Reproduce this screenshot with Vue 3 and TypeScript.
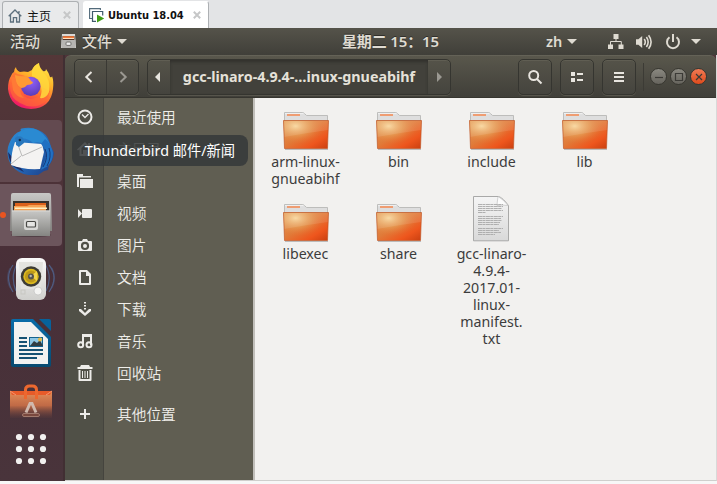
<script setup lang="ts">
interface Place { name: string; icon: string }
interface Entry { kind: 'folder' | 'text'; lines: string[] }

const places: Place[] = [
  { name: '最近使用', icon: 'recent' },
  { name: '主目录', icon: 'home' },
  { name: '桌面', icon: 'desktop' },
  { name: '视频', icon: 'video' },
  { name: '图片', icon: 'camera' },
  { name: '文档', icon: 'doc' },
  { name: '下载', icon: 'download' },
  { name: '音乐', icon: 'music' },
  { name: '回收站', icon: 'trash' },
  { name: '其他位置', icon: 'plus' },
]

const entries: Entry[] = [
  { kind: 'folder', lines: ['arm-linux-', 'gnueabihf'] },
  { kind: 'folder', lines: ['bin'] },
  { kind: 'folder', lines: ['include'] },
  { kind: 'folder', lines: ['lib'] },
  { kind: 'folder', lines: ['libexec'] },
  { kind: 'folder', lines: ['share'] },
  { kind: 'text', lines: ['gcc-linaro-', '4.9.4-', '2017.01-', 'linux-', 'manifest.', 'txt'] },
]
const paperLines: number[][] = [
  [8, 25], [10, 25], [12, 24], [14, 25], [16, 8], [20, 25], [22, 23], [24, 24], [26, 22], [28, 21], [32, 25], [34, 21], [36, 23], [38, 17],
]
const dots: number[][] = [12, 24, 36].flatMap((y) => [12, 24, 36].map((x) => [x, y]))
</script>

<template>
  <div class="screen">
    <svg class="defs" width="0" height="0">
      <defs>
        <linearGradient id="folderBase" x1="0" y1="0" x2="1" y2="1">
          <stop offset="0" stop-color="#e0995a" /><stop offset=".45" stop-color="#e07c3a" />
          <stop offset=".75" stop-color="#ee561d" /><stop offset="1" stop-color="#c93f10" />
        </linearGradient>
        <radialGradient id="folderGlow" cx=".27" cy=".2" r=".65">
          <stop offset="0" stop-color="#f8d69b" /><stop offset=".5" stop-color="#e9a55c" stop-opacity=".6" />
          <stop offset="1" stop-color="#e87030" stop-opacity="0" />
        </radialGradient>
        <linearGradient id="folderBack" x1="0" y1="0" x2="0" y2="1">
          <stop offset="0" stop-color="#fff" /><stop offset=".25" stop-color="#dedede" />
        </linearGradient>
        <linearGradient id="paper" x1="0" y1="0" x2="0" y2="1">
          <stop offset="0" stop-color="#f5f5f5" /><stop offset="1" stop-color="#d9d9d9" />
        </linearGradient>
        <linearGradient id="fox" x1=".85" y1="0" x2=".35" y2="1">
          <stop offset="0" stop-color="#fff04c" /><stop offset=".35" stop-color="#ffb52a" />
          <stop offset=".65" stop-color="#ff6a33" /><stop offset="1" stop-color="#ed1769" />
        </linearGradient>
        <radialGradient id="globe" cx=".5" cy=".25" r=".75">
          <stop offset="0" stop-color="#9160fa" /><stop offset="1" stop-color="#5a3cb8" />
        </radialGradient>
        <linearGradient id="bird" x1="0" y1="0" x2="1" y2="1">
          <stop offset="0" stop-color="#2c8fd8" /><stop offset=".55" stop-color="#2468b8" /><stop offset="1" stop-color="#1c3a83" />
        </linearGradient>
        <linearGradient id="steel" x1="0" y1="0" x2="0" y2="1">
          <stop offset="0" stop-color="#c8c8c6" /><stop offset="1" stop-color="#858582" />
        </linearGradient>
        <linearGradient id="speaker" x1="0" y1="0" x2="0" y2="1">
          <stop offset="0" stop-color="#fafafa" /><stop offset="1" stop-color="#cfcfcc" />
        </linearGradient>
        <linearGradient id="writer" x1="0" y1="0" x2="0" y2="1">
          <stop offset="0" stop-color="#096ca9" /><stop offset="1" stop-color="#084a70" />
        </linearGradient>
        <linearGradient id="bag" gradientUnits="userSpaceOnUse" x1="0" y1="10" x2="0" y2="35">
          <stop offset="0" stop-color="#e08a56" /><stop offset=".5" stop-color="#c06a46" /><stop offset="1" stop-color="#75453c" stop-opacity=".1" />
        </linearGradient>
      </defs>
    </svg>

    <header class="tabs">
      <div class="tab hometab">
        <svg width="14" height="14" viewBox="0 0 14 14" fill="none" stroke="#5d707e" stroke-width="1.3"><path d="M.7 7.2 7 1l6.3 6.2M2.5 6v7H5.4V8.7h3.2V13h2.9V6M11 2v2" /></svg>
        <span class="cn">主页</span>
        <svg class="x" width="8" height="8" viewBox="0 0 8 8"><path d="m.8.8 6.4 6.4M7.2.8.8 7.2" /></svg>
      </div>
      <div class="tab vm">
        <svg width="16" height="15" viewBox="0 0 16 15" fill="none"><path d="M3 10.5H.6V.6h10.8V2" stroke="#526a7a" stroke-width="1.1" /><path d="M7 13.3H3.5V3.5h10.2v4" stroke="#405a6b" stroke-width="1.2" /><path d="M8 6.5 15.2 10.5 8 14.5Z" fill="#429d16" /></svg>
        <span class="vmname">Ubuntu 18.04</span>
        <svg class="x" width="8" height="8" viewBox="0 0 8 8"><path d="m.8.8 6.4 6.4M7.2.8.8 7.2" /></svg>
      </div>
    </header>

    <div class="panel">
      <span class="activities">活动</span>
      <svg class="minifiles" width="15" height="15" viewBox="0 0 15 15"><path d="M1 0h13l1 14H0Z" fill="#dad9d6" /><path d="M1.5 2h12v4h-12z" fill="#54382d" /><path d="M2 2.2h11v2.5H2z" fill="#f17b3c" /><path d="M2 4h11v1H2z" fill="#ffe0bd" /><path d="M.5 6h14v8H.5z" fill="#b6b5b2" /><rect x="5" y="8" width="5" height="3.4" rx="1" fill="#eee" stroke="#73726f" /></svg>
      <span class="appname">文件</span>
      <i class="caret"></i>
      <span class="clock">星期二 15：15</span>
      <div class="status">
        <span class="zh">zh</span><i class="caret"></i>
        <svg class="net" width="16" height="16" viewBox="0 0 16 16"><path d="M5.5 0h5v5h-5zM0 10.5h5V15H0zM10.5 10.5h5V15h-5z" fill="#dfdbd2" /><path d="M8 5v3M2.5 11V7.5h10.8V11" fill="none" stroke="#dfdbd2" /></svg>
        <svg class="vol" width="16" height="16" viewBox="0 0 16 16"><path d="M0 5.2h2.4L6.2 2v12L2.4 10.8H0Z" fill="#dfdbd2" /><path d="M8.2 5q2.2 3 0 6M10.4 3q3.5 5 0 10M12.6 1.2q5 6.8 0 13.6" fill="none" stroke="#dfdbd2" stroke-width="1.6" /></svg>
        <svg class="pow" width="16" height="16" viewBox="0 0 16 16" fill="none" stroke="#dfdbd2" stroke-width="2"><path d="M4.5 3.3a6 6 0 1 0 7 0M8 0v8" /></svg>
        <i class="caret"></i>
      </div>
    </div>

    <main class="session">
      <nav class="dock">
        <div class="tile">
          <svg width="48" height="48" viewBox="0 0 48 48">
            <path d="M7 9q0-3 2-5 0 3 4 5 4-1 8 0 2-1 4-2 2-5 7-7 0 4 4 8 3 1 3-2 3 4 4 8 2 1 2-1 2 5 1 13-2 19-22 20Q3 45 1 26 1 17 4 13q1-3 3-4Z" fill="url(#fox)" />
            <path d="M7 9q4 3 8 3l6 2-6 10q0 11 9 12 11-1 11-12l8 4q-2 11-10 14-10 4-20-2Q3 35 3 24q0-9 4-15Z" fill="#ff6a35" opacity=".65" />
            <path d="M25 8q1-5 7-8 0 6 4 9 8 7 6 20-3 7-9 6 3-8 0-14-2-6-8-8Z" fill="#ffd93c" opacity=".85" />
            <circle cx="23.8" cy="23.4" r="9.7" fill="url(#globe)" />
            <path d="M8 12q6 2 11 1 3 1 5 5 2 1 2 2-2 2-6 2-2 3-6 3Q8 22 8 12Z" fill="#ff9a35" />
            <path d="M4 14q4-1 5 3 0 5 5 8-2 6 3 10-8-1-11-8Z" fill="#ff7a36" />
          </svg>
        </div>
        <div class="tile hover">
          <svg width="48" height="48" viewBox="0 0 48 48">
            <path d="M2 17Q6 6 14 4 12 1 18 1q7-1 13 2 9 3 12 13l1 5q3 2 3 5-1 8-5 12l-1 5-4 1-6 4Q14 50 5 39-1 31 1 20Z" fill="url(#bird)" />
            <path d="M14 4Q26-2 36 7q7 7 8 16-9-10-18-7-6-6-14-4-3-5 2-8Z" fill="#2a8ad2" />
            <path d="M1 25q1 10 6 15l10 5-5-6Z" fill="#1b2d66" />
            <path d="m8 15 27 2 2 8-4 17Q16 43 4 38Q4 26 8 15Z" fill="#f4f3f2" />
            <path d="m10 15 5 14 20-9M4 37l10-8" fill="none" stroke="#b3b3b3" stroke-width=".9" />
            <path d="M8 11q3-3 7-1 3 3 2 6l-5 4-3-2Q9 15 8 11Z" fill="#2877bd" /><circle cx="12.8" cy="13" r="1.2" fill="#142d4d" />
            <path d="M34 17q8 7 4 16l-4 10 7-4q5-5 5-13-2-10-8-14Z" fill="#2170c2" /><path d="M38 22q4 8-2 18M42 21q3 9-2 18" fill="none" stroke="#173a7b" />
          </svg>
        </div>
        <div class="tile running">
          <svg width="48" height="48" viewBox="0 0 48 48">
            <ellipse cx="24" cy="44" rx="20" ry="2" fill="#2b1e24" opacity=".4" />
            <path d="M4 4q0-2 2-2h36q2 0 2 2l1 36H3Z" fill="url(#steel)" /><path d="M6 10h36v12H6z" fill="#39322d" />
            <path d="M8 12h31v9H8z" fill="#dc611b" /><path d="M7 15h13l2-1h17v7H7z" fill="#f6a254" /><path d="M8 16.5h32v1.5H8z" fill="#fff0c3" />
            <path d="M5 19.5h38V45H5Z" fill="url(#steel)" /><path d="M5 20h38" stroke="#d8d8d6" /><rect x="17" y="28" width="14" height="11" rx="2" fill="#d8d8d6" /><rect x="19.5" y="30.5" width="9" height="5.5" rx="1" fill="#e5e5e3" stroke="#494946" stroke-width="1.2" />
          </svg>
        </div>
        <div class="tile">
          <svg width="48" height="48" viewBox="0 0 48 48">
            <g fill="none" stroke="#526c9b" stroke-width="1.2" opacity=".75"><path d="M10 9Q3 22 9 36M6 10Q-3 22 6 37M38 9q8 13 1 27M42 10q10 12 0 27" /><path d="M3 13q-5 10 0 20M45 13q5 10 0 20" opacity=".4" /></g>
            <rect x="9" y="3" width="30" height="42" rx="6" fill="url(#speaker)" /><path d="M12 7h24l-2 27H14Z" fill="#e3e3e0" />
            <circle cx="24" cy="21.5" r="10.2" fill="#3d3c36" /><circle cx="24" cy="21.5" r="7.7" fill="#dbb91f" /><circle cx="24" cy="21.5" r="6" fill="#bd9819" /><path d="m24 21 6-5v10Z" fill="#f2d44c" /><circle cx="24" cy="21.5" r="3" fill="#55534e" /><circle cx="23.7" cy="21" r="1.2" fill="#b9b9b4" /><circle cx="31" cy="36" r="4" fill="#f4f4f2" stroke="#bbb" stroke-width=".6" /><rect x="14" y="35" width="4" height="4" fill="none" stroke="#c7c7c2" />
          </svg>
        </div>
        <div class="tile">
          <svg width="48" height="48" viewBox="0 0 48 48">
            <path d="M4 2q0-2 2-2h20l18 18v28q0 2-2 2H6q-2 0-2-2Z" fill="url(#writer)" /><path d="M7 3h17l17 17v25H7Z" fill="#f2f2f1" /><path d="M32 0h10q2 0 2 2v10Z" fill="#07629b" />
            <path d="M12 19h8M12 23h8M12 27h8M12 31h24M12 35h24M12 39h18" stroke="#155173" stroke-width="2" /><rect x="22" y="18" width="14" height="10" fill="#17638d" /><rect x="23" y="19" width="12" height="7.5" fill="#8ec7e5" /><path d="m23 27 4-5 3 2 3-3 3 6Z" fill="#323d43" /><circle cx="33" cy="20.5" r="2" fill="#e5bb47" />
          </svg>
        </div>
        <div class="tile cut">
          <svg width="48" height="48" viewBox="0 0 48 48">
            <path d="M3 8h42v27H3Z" fill="url(#bag)" /><path d="M3 8h42l-2 4H5Z" fill="#e75b29" /><path d="m3 8 6 4M45 8l-6 4" stroke="#f59570" /><path d="M18.5 16V7q0-4 4-4h3q4 0 4 4v9" fill="none" stroke="#ed682f" stroke-width="3" /><path d="m19 29.5 4-9h2l4 9" fill="none" stroke="#d0b9ae" stroke-width="3" /><rect x="15.5" y="30.5" width="17" height="3" rx="1.5" fill="#79483e" stroke="#a27a6d" />
          </svg>
        </div>
        <div class="apps">
          <svg width="48" height="48" viewBox="0 0 48 48"><circle v-for="(d, i) in dots" :key="i" :cx="d[0]" :cy="d[1]" r="3.1" fill="#f1f0ef" /></svg>
        </div>
      </nav>

      <section class="window">
        <div class="headerbar">
          <div class="group history">
            <span><svg width="10" height="14" viewBox="0 0 10 14"><path d="M7.5 2 2.3 7l5.2 5" /></svg></span>
            <span class="dim"><svg width="10" height="14" viewBox="0 0 10 14"><path d="m2.5 2 5.2 5-5.2 5" /></svg></span>
          </div>
          <div class="group pathbar">
            <span class="step"><svg width="5" height="10" viewBox="0 0 5 10"><path class="solid" d="M5 0v10L0 5Z" /></svg></span>
            <span class="crumb"><b>gcc-linaro-4.9.4-…inux-gnueabihf</b></span>
            <span class="step dim"><svg width="5" height="10" viewBox="0 0 5 10"><path class="solid" d="M0 0v10l5-5Z" /></svg></span>
          </div>
          <div class="tools">
            <span class="group tool"><svg width="16" height="16" viewBox="0 0 16 16"><circle cx="6.7" cy="6.5" r="4.5" /><path d="m10 10 4.5 4.5" /></svg></span>
            <span class="group tool"><svg width="16" height="16" viewBox="0 0 16 16"><path class="solid" d="M2 3h4v4H2zM2 9h4v4H2zM8 4h6v2H8zM8 10h6v2H8z" /></svg></span>
            <span class="group tool"><svg width="16" height="16" viewBox="0 0 16 16"><path class="solid" d="M3 3h10v2H3zM3 7h10v2H3zM3 11h10v2H3z" /></svg></span>
          </div>
          <div class="controls">
            <span class="ctl"><svg width="10" height="10" viewBox="0 0 10 10"><path d="M1 5.5h8" /></svg></span>
            <span class="ctl"><svg width="10" height="10" viewBox="0 0 10 10"><path d="M1.5 1.5h7v7h-7z" /></svg></span>
            <span class="ctl close"><svg width="10" height="10" viewBox="0 0 10 10"><path d="m2 2 6 6M8 2 2 8" /></svg></span>
          </div>
        </div>
        <div class="body">
          <aside class="sidebar">
            <div v-for="p in places" :key="p.name" class="place" :class="{ other: p.icon === 'plus' }">
              <span class="pic">
                <svg width="16" height="16" viewBox="0 0 16 16">
                  <template v-if="p.icon === 'recent'"><circle cx="8" cy="8" r="6.5" class="l" /><path class="l thin" d="m5 5.5 3 3 3.5-3.5" /></template>
                  <path v-else-if="p.icon === 'home'" fill-rule="evenodd" d="M8 1 0 8.5l1 1 1.5-1.3V15h11V8.2L15 9.5l1-1-3-2.8V2h-2v2ZM4.5 7 8 3.7 11.5 7v6H10V9H6v4H4.5Z" />
                  <path v-else-if="p.icon === 'desktop'" fill-rule="evenodd" d="M0 1h6v2h8v1.5H2V14H0ZM3 6h13v9H3Z" />
                  <path v-else-if="p.icon === 'video'" d="M6 4h8q1 0 1 1v7q0 1-1 1H6q-1 0-1-1V5q0-1 1-1ZM1 4l4 4.5L1 13Z" />
                  <path v-else-if="p.icon === 'camera'" fill-rule="evenodd" d="M2 4h3l1-2h4l1 2h3q1 0 1 1v8q0 1-1 1H2q-1 0-1-1V5q0-1 1-1ZM8 4.8a4.1 4.1 0 1 0 0 8.2 4.1 4.1 0 0 0 0-8.2M8 7a2 2 0 1 1 0 4 2 2 0 0 1 0-4" />
                  <path v-else-if="p.icon === 'doc'" fill-rule="evenodd" d="M3 1h7l4 4v10q0 1-1 1H3q-1 0-1-1V2q0-1 1-1M4 3v11h8V7H9V3Z" />
                  <path v-else-if="p.icon === 'download'" d="M7 1h2v1.5H7zM7 4h2v1.5H7zM7 7h2v1.5H7zM2 8h2l4 4 4-4h2v2l-6 5-6-5Z" />
                  <template v-else-if="p.icon === 'music'"><path d="M5 1h10v3H7v8H5ZM13 2h2v10h-2Z" /><circle class="l" cx="3.7" cy="11.7" r="2.5" /><circle class="l" cx="12" cy="11.7" r="2.5" /></template>
                  <path v-else-if="p.icon === 'trash'" fill-rule="evenodd" d="M4 0h8l1 2h2.5v2H.5V2H3ZM1.5 5h13v10q0 1-1 1h-11q-1 0-1-1ZM3.5 5v9h9V5ZM5 6h1v7H5zM7.5 6h1v7h-1zM10 6h1v7h-1z" />
                  <path v-else d="M7 3h2v4h4v2H9v4H7V9H3V7h4z" />
                </svg>
              </span>
              <span class="pname">{{ p.name }}</span>
            </div>
          </aside>
          <div class="files">
            <div v-for="e in entries" :key="e.lines.join('')" class="entry">
              <div class="thumb">
                <svg v-if="e.kind === 'folder'" width="46" height="38" viewBox="0 0 46 38">
                  <path d="M2 37.5h43" stroke="#bbb" />
                  <path d="M1.5 9V.5h18.3q1 .2 1.8 1.2l2 1.8H44.5V9" fill="url(#folderBack)" stroke="#b8b8b6" stroke-width=".9" />
                  <path d="M4 2h13v2H4z" fill="#ef9d72" />
                  <path d="M.5 8.5h45L44.5 36.5H1.5Z" fill="url(#folderBase)" />
                  <path d="M.5 8.5h45L44.5 36.5H1.5Z" fill="url(#folderGlow)" />
                  <path d="M1 9h44v9Q23 21 1 25Z" fill="#fff" opacity=".1" />
                  <path d="M.5 8.5h45L44.5 36.5H1.5Z" fill="none" stroke="#bd5425" stroke-width=".8" opacity=".85" />
                </svg>
                <svg v-else class="sheet" width="36" height="46" viewBox="0 0 36 46">
                  <path d="M.5.5h25q4 1 10 9v35.3H.5Z" fill="url(#paper)" stroke="#a9a9a8" /><path d="M25 .5q-1 7-1 9 5-1 11 0Q30 3 25 .5Z" fill="#fcfcfc" stroke="#b7b7b7" stroke-width=".6" />
                  <path v-for="l in paperLines" :key="l[0]" :d="`M5 ${l[0] + .5}h${l[1]}`" stroke="#a8a8a8" stroke-width=".9" stroke-dasharray="4 .4 3 .5" />
                </svg>
              </div>
              <div class="label">{{ e.lines.join('\n') }}</div>
            </div>
          </div>
        </div>
      </section>
      <div class="tooltip">Thunderbird 邮件/新闻</div>
    </main>
  </div>
</template>

<style>
body { margin: 0; overflow: hidden; }
</style>

<style scoped>
* { box-sizing: border-box; }
svg { display: block; flex: none; }
.defs { position: absolute; }
.screen { width: 717px; height: 484px; display: flex; flex-direction: column; background: #f7f7f7; font: 15px/17px 'Noto Sans', 'Noto Sans CJK SC', sans-serif; color: #dfdbd2; overflow: hidden; white-space: nowrap; }
.tabs { height: 28px; flex: none; display: flex; gap: 4px; padding: 1px 0 0 2px; background: #e3e4e6; }
.tab { height: 27px; display: flex; align-items: center; border: 1px solid #adb0b3; border-bottom: 0; border-radius: 3px 3px 0 0; background: #e9eaeb; color: #111; }
.hometab { width: 77px; padding: 1px 0 0 5px; }
.vm { width: 126px; background: #fff; border-color: #fff #adb0b3 #fff #fff; padding-left: 5px; }
.cn { font: 12px/16px 'Noto Sans CJK SC', sans-serif; width: 24px; margin-left: 5px; }
.vmname { font: bold 11px/16px 'DejaVu Sans Condensed', sans-serif; width: 77px; margin-left: 3px; padding-top: 1px; }
.x { fill: none; stroke: #c6c7c8; stroke-width: 2; }
.hometab .x { margin: 0 0 2px 12px; }
.vm .x { margin-left: 8px; }
.panel { height: 27px; flex: none; display: flex; align-items: center; background: linear-gradient(#55534a, #403f39); font-weight: 500; padding: 0 16px 0 10px; }
.activities { width: 30px; }
.minifiles { margin: 0 6px 0 21px; }
.appname { width: 30px; margin-right: 5px; }
.caret { width: 0; border: 5px solid transparent; border-top-color: #dfdbd2; border-bottom: 0; flex: none; }
.clock { margin-left: 215px; font-weight: 600; letter-spacing: -.15px; }
.activities, .appname, .clock { padding-bottom: 1px; text-shadow: 0 -1px #302f2b; }
.status { margin-left: auto; display: flex; align-items: center; }
.zh { width: 16px; font-weight: 600; margin-right: 5px; font-size: 14.5px; }
.net { margin-left: 31px; }
.vol { margin-left: 12px; }
.pow { margin: 0 10px 0 13px; }
.session { height: 426px; display: flex; flex: none; position: relative; background: #4e3439; }
.dock { width: 65px; display: flex; flex-direction: column; gap: 2px; padding-top: 1px; background: linear-gradient(#543738, #482f38 50%, #49343b); border-right: 2px solid #412f33; }
.tile { width: 62px; height: 62px; flex: none; padding: 7px; border-radius: 0 4px 4px 0; position: relative; }
.hover { background: #634a50; }
.running { background: #6c555c; }
.running::before { content: ''; position: absolute; left: 0; top: 28px; width: 6px; height: 6px; border-radius: 50%; background: #e95420; }
.cut { height: 42px; overflow: hidden; }
.apps { padding: 5px 7px; }
.window { flex: 1; display: flex; flex-direction: column; border-right: 1px solid #d9d9d8; border-bottom: 1px solid #cfcfcd; }
.headerbar { height: 43px; flex: none; display: flex; align-items: center; padding: 0 8px 0 9px; background: linear-gradient(#59574c, #403f39); border-top: 1px solid #646257; border-bottom: 1px solid #36352f; border-radius: 6px 6px 0 0; }
.group { height: 36px; display: flex; border: 1px solid #353530; border-radius: 5px; background: linear-gradient(#555349, #45443e); box-shadow: inset 0 1px #605e53, 0 1px #57554c; overflow: hidden; }
.group svg { fill: none; stroke: #e8e5df; stroke-width: 2; }
.group .solid { fill: #e8e5df; stroke: none; }
.group > span { display: flex; align-items: center; justify-content: center; }
.history { width: 65px; }
.history > span { width: 32px; flex: none; }
.history > span:first-child { border-right: 1px solid #3a3934; padding-right: 3px; }
.dim svg { opacity: .5; }
.pathbar { width: 304px; margin-left: 8px; }
.step { width: 22px; flex: none; }
.step:first-child { padding-right: 3px; }
.crumb { flex: 1; background: #42413b; box-shadow: inset 0 2px 3px #32312d; color: #e5e1d9; font-size: 14.3px; }
.tools { display: flex; gap: 8px; margin-left: 67px; }
.tool { width: 34px; align-items: center; justify-content: center; }
.controls { display: flex; align-items: center; gap: 3px; margin-left: 7px; padding-left: 6px; height: 28px; border-left: 1px solid #3c3b35; }
.ctl { width: 17px; height: 17px; border-radius: 50%; display: flex; align-items: center; justify-content: center; border: 1px solid #383731; background: linear-gradient(#8a8880, #66645d); }
.ctl svg { fill: none; stroke: #3c3b37; stroke-width: 1.2; }
.close { background: linear-gradient(#f17a54, #df4b1c); }
.body { flex: 1; min-height: 0; display: flex; }
.sidebar { width: 190px; padding-top: 3px; background: linear-gradient(90deg, #505047 0 38px, #45443e 38px 39px, #605e52 39px); border-right: 2px solid #c1bfba; }
.place { height: 32px; display: flex; align-items: center; }
.other { margin-top: 9px; }
.pic { width: 38px; padding-left: 12px; }
.pic svg { fill: #ecebe8; }
.pic .l { fill: none; stroke: #ecebe8; stroke-width: 2; }
.pic .thin { stroke-width: 1.3; }
.pname { margin-left: 14px; font: 350 14.7px/20px 'Noto Sans CJK SC', sans-serif; color: #efeeea; }
.files { flex: 1; display: grid; grid-template-columns: repeat(4, 93px); grid-template-rows: 92px auto; align-content: start; padding: 6px 0 0 4px; background: #f2f1ef; color: #3c3c3c; }
.entry { display: flex; flex-direction: column; align-items: center; }
.thumb { height: 46px; display: flex; align-items: flex-end; }
.sheet { margin-right: 2px; }
.label { text-align: center; margin-top: 3px; font-size: 14.2px; line-height: 17px; white-space: pre; }
.tooltip { position: absolute; left: 72px; top: 80px; width: 176px; height: 31px; border-radius: 8px; background: rgba(53, 57, 58, .86); color: #fff; font: 14.3px/32px 'Noto Sans', 'Noto Sans CJK SC', sans-serif; text-align: center; }
</style>
